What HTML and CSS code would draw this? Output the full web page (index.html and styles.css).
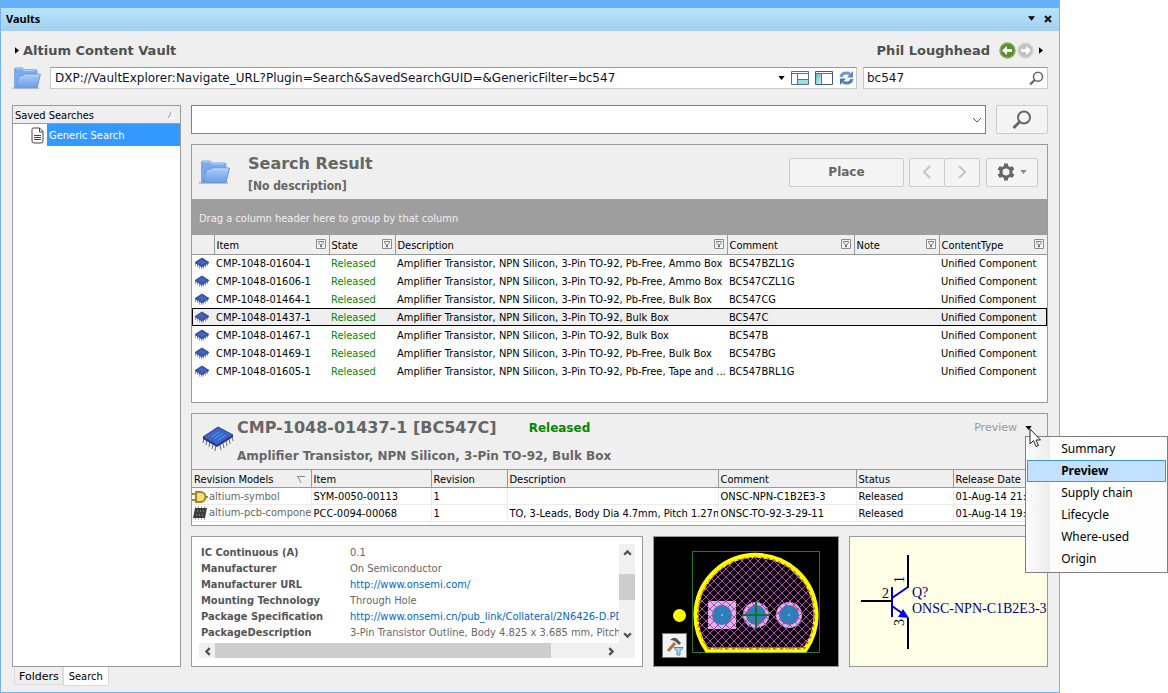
FILE: index.html
```html
<!DOCTYPE html>
<html lang="en">
<head>
  <meta charset="UTF-8">
  <title>Vaults</title>
  <link rel="stylesheet" href="styles.css">
</head>
<body>
  <!-- shared icons -->
  <svg class="defs" width="0" height="0" aria-hidden="true">
    <defs>
      <linearGradient id="folderFront" x1="0" y1="0" x2="0" y2="1">
        <stop offset="0" stop-color="#a9cdfa"/><stop offset="1" stop-color="#6e9be4"/>
      </linearGradient>
      <linearGradient id="pane" x1="0" y1="0" x2="1" y2="1">
        <stop offset="0" stop-color="#5fb4cd"/><stop offset="1" stop-color="#d8f4f8"/>
      </linearGradient>
    </defs>
    <symbol id="folder" viewBox="0 0 32 26">
      <path d="M0 24h29" stroke="#b9bfc9" stroke-width="2"/>
      <path d="M2.500 23V3.500q0-1.500 1.500-1.500h7l2 2h12.500q1.500 0 1.500 1.500V22z" fill="#7aa9ec" stroke="#7fa9e4"/>
      <path d="M4 3h7l2 2h12" stroke="#b8d5fb" fill="none"/>
      <path d="M3.500 23.500L7.500 11h4l1.500-2h17.500L27 23.500z" fill="url(#folderFront)" stroke="#6b97dc"/>
      <path d="M8.500 12h3.500l1.500-2h15.500" stroke="#c3dcfd" fill="none"/>
    </symbol>
    <symbol id="chip" viewBox="0 0 32 26">
      <path d="M2 12l-1 5M5 14l-1 5M8 16l-1 5M11 18l-1 5M14 19l-1 6M18 19l1 5M21 17l1 5M24 15l1 5M27 13l1 5M30 11l1 4" stroke="#6c6c76"/>
      <path d="M1 11v2l14 8 16-10V9z" fill="#26357f"/>
      <path d="M1 11L16 1l15 8-16 10z" fill="#4262c8" stroke="#2a3f96"/>
      <path d="M9 11l8-5M12 13l9-6M16 14l8-5" stroke="#35b0d8"/>
    </symbol>
    <symbol id="chipSmall" viewBox="0 0 16 12">
      <path d="M1.500 6v3M3.500 7v3M5.500 8v3.500M7.500 9v3M9.500 9v2.500M11.500 8v2.500M13.500 6v3" stroke="#9a9ca8"/>
      <path d="M1 5.500L8 1l7 4.500L8 10z" fill="#3c58ae" stroke="#3a4e92"/>
      <path d="M5 5.500l4-2M7 7l4-2" stroke="#5076c4"/>
    </symbol>
    <symbol id="filter" viewBox="0 0 10 10">
      <path d="M.5.5h9v9h-9z" fill="#f4f4f4" stroke="#8c8c8c"/>
      <path d="M2.500 2.500h5v1L5.500 6v2h-1V6l-2-2.500z" fill="none" stroke="#777"/>
    </symbol>
    <symbol id="magnifier" viewBox="0 0 20 20">
      <circle cx="12" cy="7.500" r="6" fill="none" stroke="#666" stroke-width="2"/>
      <path d="M7.500 12L1.500 18" stroke="#666" stroke-width="3"/>
    </symbol>
    <symbol id="down" viewBox="0 0 8 5"><path d="M0 0h8L4 5z"/></symbol>
    <symbol id="right" viewBox="0 0 5 8"><path d="M0 0l5 4-5 4z"/></symbol>
    <symbol id="chev" viewBox="0 0 10 16"><path d="M8 2L2 8l6 6" fill="none" stroke="currentColor" stroke-width="2"/></symbol>
    <symbol id="scroll" viewBox="0 0 8 6"><path d="M1 5l3-3 3 3" fill="none" stroke="#505050" stroke-width="2"/></symbol>
  </svg>

  <div class="window">
    <header class="titlebar">
      <span>Vaults</span>
      <button class="icon-btn" aria-label="Panel menu"><svg width="7" height="5"><use href="#down"/></svg></button>
      <button class="icon-btn" aria-label="Close"><svg width="8" height="8" viewBox="0 0 8 8"><path d="M1 1l6 6M7 1L1 7" stroke="#111" stroke-width="2"/></svg></button>
    </header>

    <div class="body">
      <div class="vault-row">
        <button class="icon-btn" aria-label="Choose vault"><svg width="4" height="7"><use href="#right"/></svg></button>
        <h1>Altium Content Vault</h1>
        <span class="user">Phil Loughhead</span>
        <button class="icon-btn" aria-label="Back"><svg width="17" height="17" viewBox="0 0 17 17"><circle cx="8.500" cy="8.500" r="7.500" fill="#5c8f29" stroke="#8aa96b" stroke-width="1.500"/><path d="M3 8.500L8 4v3h5v3H8v3z" fill="#fff"/></svg></button>
        <button class="icon-btn" aria-label="Forward"><svg width="17" height="17" viewBox="0 0 17 17"><circle cx="8.500" cy="8.500" r="7.500" fill="#c2c2c2" stroke="#d6d6d6" stroke-width="1.500"/><path d="M14 8.500L9 4v3H4v3h5v3z" fill="#fff"/></svg></button>
        <button class="icon-btn more" aria-label="More"><svg width="4" height="7"><use href="#right"/></svg></button>
      </div>

      <div class="address-row">
        <svg class="folder" width="30" height="24"><use href="#folder"/></svg>
        <div class="field address">
          <input type="text" aria-label="Address" value="DXP://VaultExplorer:Navigate_URL?Plugin=Search&amp;SavedSearchGUID=&amp;GenericFilter=bc547">
          <button class="icon-btn" aria-label="History"><svg width="7" height="4" viewBox="0 0 8 5"><path d="M0 0h8L4 5z"/></svg></button>
          <button class="icon-btn" aria-label="Preview layout"><svg width="18" height="14" viewBox="0 0 18 14"><path d="M.5.5h17v13H.5z" fill="#fff" stroke="#55718c"/><path d="M1 2.500h16M6.500 3v10M7 8.500h10" stroke="#55718c" fill="none"/><path d="M7 9h10v4H7z" fill="#9fdce4"/></svg></button>
          <button class="icon-btn" aria-label="Tree layout"><svg width="18" height="14" viewBox="0 0 18 14"><path d="M.5.5h17v13H.5z" fill="#fff" stroke="#3f5a7c"/><path d="M1 3h5v10H1z" fill="url(#pane)"/><path d="M1 2.500h16M6.500 3v10" stroke="#55718c" fill="none"/></svg></button>
          <button class="icon-btn" aria-label="Refresh"><svg width="15" height="14" viewBox="0 0 15 14"><path d="M2 6a5.500 4.500 0 0 1 9-3" fill="none" stroke="#6f97cd" stroke-width="3"/><path d="M14 0v6.500H8z" fill="#5d86bf"/><path d="M13 8a5.500 4.500 0 0 1-9 3" fill="none" stroke="#5b80b6" stroke-width="3"/><path d="M1 14V7.500h6z" fill="#4b74ae"/></svg></button>
        </div>
        <div class="field quick">
          <input type="text" aria-label="Quick search" value="bc547">
          <button class="icon-btn" aria-label="Find"><svg width="15" height="15"><use href="#magnifier"/></svg></button>
        </div>
      </div>

      <div class="main">
        <aside class="sidebar">
          <div class="tree">
            <div class="tree-head">Saved Searches <svg width="8" height="8" viewBox="0 0 8 8"><path d="M1 7.500L4.500 0" stroke="#999"/><path d="M4.500 0L7.500 7.500H0" stroke="#fff" fill="none"/></svg></div>
            <div class="tree-item">
              <svg width="13" height="17" viewBox="0 0 13 17"><path d="M2.500 1h6L12 4.500V14q0 2-2 2H3q-2 0-2-2V2.500Q1 1 2.500 1zM8.500 1v4H12" fill="#fff" stroke="#444"/><path d="M3 8.500h7M3 10.500h7M3 12.500h7" stroke="#444"/></svg>
              <a href="#">Generic Search</a>
            </div>
          </div>
          <nav class="tabs">
            <button class="tab folders">Folders</button>
            <button class="tab active">Search</button>
          </nav>
        </aside>

        <main class="content">
          <div class="search-row">
            <div class="combo">
              <select aria-label="Search query"><option></option></select>
              <svg width="10" height="6" viewBox="0 0 10 6"><path d="M1 1l4 4 4-4" fill="none" stroke="#555"/></svg>
            </div>
            <button class="btn" aria-label="Search"><svg width="20" height="20"><use href="#magnifier"/></svg></button>
          </div>

          <section class="panel results">
            <div class="results-head">
              <svg class="folder" width="32" height="26"><use href="#folder"/></svg>
              <div class="results-title">
                <h2>Search Result</h2>
                <p>[No description]</p>
              </div>
              <button class="btn place">Place</button>
              <div class="pager">
                <button class="btn" aria-label="Previous"><svg width="10" height="16"><use href="#chev"/></svg></button>
                <button class="btn" aria-label="Next"><svg class="flip" width="10" height="16"><use href="#chev"/></svg></button>
              </div>
              <button class="btn gear" aria-label="Settings">
                <svg width="18" height="18" viewBox="0 0 18 18"><circle cx="9" cy="9" r="5" fill="none" stroke="#666" stroke-width="3"/><path d="M9 .5v3M9 14.500v3M1.600 4.700l2.700 1.600M13.700 11.700l2.700 1.600M1.600 13.300l2.700-1.600M13.700 6.300l2.700-1.600" stroke="#666" stroke-width="4"/></svg>
                <svg width="7" height="4" viewBox="0 0 8 5"><path d="M0 0h8L4 5z" fill="#888"/></svg>
              </button>
            </div>
            <div class="group-bar">Drag a column header here to group by that column</div>
            <table class="grid">
              <colgroup><col class="w-icon"><col class="w-item"><col class="w-state"><col><col class="w-comment"><col class="w-note"><col class="w-type"></colgroup>
              <thead>
                <tr>
                  <td></td>
                  <th><span>Item<button class="icon-btn" aria-label="Filter Item"><svg width="10" height="10"><use href="#filter"/></svg></button></span></th>
                  <th><span>State<button class="icon-btn" aria-label="Filter State"><svg width="10" height="10"><use href="#filter"/></svg></button></span></th>
                  <th><span>Description<button class="icon-btn" aria-label="Filter Description"><svg width="10" height="10"><use href="#filter"/></svg></button></span></th>
                  <th><span>Comment<button class="icon-btn" aria-label="Filter Comment"><svg width="10" height="10"><use href="#filter"/></svg></button></span></th>
                  <th><span>Note<button class="icon-btn" aria-label="Filter Note"><svg width="10" height="10"><use href="#filter"/></svg></button></span></th>
                  <th><span>ContentType<button class="icon-btn" aria-label="Filter ContentType"><svg width="10" height="10"><use href="#filter"/></svg></button></span></th>
                </tr>
              </thead>
              <tbody>
                <tr><td><svg width="16" height="12"><use href="#chipSmall"/></svg></td><td>CMP-1048-01604-1</td><td class="released">Released</td><td>Amplifier Transistor, NPN Silicon, 3-Pin TO-92, Pb-Free, Ammo Box</td><td>BC547BZL1G</td><td></td><td>Unified Component</td></tr>
                <tr><td><svg width="16" height="12"><use href="#chipSmall"/></svg></td><td>CMP-1048-01606-1</td><td class="released">Released</td><td>Amplifier Transistor, NPN Silicon, 3-Pin TO-92, Pb-Free, Ammo Box</td><td>BC547CZL1G</td><td></td><td>Unified Component</td></tr>
                <tr><td><svg width="16" height="12"><use href="#chipSmall"/></svg></td><td>CMP-1048-01464-1</td><td class="released">Released</td><td>Amplifier Transistor, NPN Silicon, 3-Pin TO-92, Pb-Free, Bulk Box</td><td>BC547CG</td><td></td><td>Unified Component</td></tr>
                <tr class="selected"><td><svg width="16" height="12"><use href="#chipSmall"/></svg></td><td>CMP-1048-01437-1</td><td class="released">Released</td><td>Amplifier Transistor, NPN Silicon, 3-Pin TO-92, Bulk Box</td><td>BC547C</td><td></td><td>Unified Component</td></tr>
                <tr><td><svg width="16" height="12"><use href="#chipSmall"/></svg></td><td>CMP-1048-01467-1</td><td class="released">Released</td><td>Amplifier Transistor, NPN Silicon, 3-Pin TO-92, Bulk Box</td><td>BC547B</td><td></td><td>Unified Component</td></tr>
                <tr><td><svg width="16" height="12"><use href="#chipSmall"/></svg></td><td>CMP-1048-01469-1</td><td class="released">Released</td><td>Amplifier Transistor, NPN Silicon, 3-Pin TO-92, Pb-Free, Bulk Box</td><td>BC547BG</td><td></td><td>Unified Component</td></tr>
                <tr><td><svg width="16" height="12"><use href="#chipSmall"/></svg></td><td>CMP-1048-01605-1</td><td class="released">Released</td><td>Amplifier Transistor, NPN Silicon, 3-Pin TO-92, Pb-Free, Tape and ...</td><td>BC547BRL1G</td><td></td><td>Unified Component</td></tr>
              </tbody>
            </table>
          </section>

          <section class="panel detail">
            <div class="detail-head">
              <svg class="chip" width="32" height="26"><use href="#chip"/></svg>
              <div class="detail-title">
                <div class="detail-name"><h2>CMP-1048-01437-1 [BC547C]</h2><strong>Released</strong></div>
                <p>Amplifier Transistor, NPN Silicon, 3-Pin TO-92, Bulk Box</p>
              </div>
              <div class="view-picker">
                <span>Preview</span>
                <button class="icon-btn" aria-label="Choose view"><svg width="7" height="4" viewBox="0 0 8 5"><path d="M0 0h8L4 5z"/></svg></button>
                <div class="menu">
                  <button>Summary</button>
                  <button class="current">Preview</button>
                  <button>Supply chain</button>
                  <button>Lifecycle</button>
                  <button>Where-used</button>
                  <button>Origin</button>
                </div>
                <svg class="cursor" width="12" height="20" viewBox="0 0 12 20"><path d="M1 1v15l3.500-3.500L7 18.500l2.500-1L7 12h4.500z" fill="#fff" stroke="#222"/></svg>
              </div>
            </div>
            <table class="grid models">
              <colgroup><col class="m-model"><col class="m-item"><col class="m-rev"><col><col class="m-comment"><col class="m-status"><col class="m-date"></colgroup>
              <thead>
                <tr>
                  <th><span>Revision Models <svg width="8" height="7" viewBox="0 0 8 7"><path d="M0 .5h8M1 .5L4 7" stroke="#888" fill="none"/></svg></span></th>
                  <th>Item</th><th>Revision</th><th>Description</th><th>Comment</th><th>Status</th><th>Release Date</th>
                </tr>
              </thead>
              <tbody>
                <tr>
                  <td class="model"><svg width="16" height="12" viewBox="0 0 16 12"><path d="M0 3h4M0 9h4M13 6h3" stroke="#a8822a" stroke-width="2"/><path d="M4 1h4.500a5 5 0 0 1 0 10H4z" fill="#f3e077" stroke="#a8822a" stroke-width="2"/></svg>altium-symbol</td>
                  <td>SYM-0050-00113</td><td>1</td><td></td><td>ONSC-NPN-C1B2E3-3</td><td>Released</td><td>01-Aug-14 21:</td>
                </tr>
                <tr>
                  <td class="model"><svg width="16" height="14" viewBox="0 0 16 14"><path d="M3.500 0v14M6.500 0v14M9.500 0v14M12.500 0v14" stroke="#aaa"/><path d="M3 2h12l-2 10H1z" fill="#3d3d3d"/><path d="M5 5h1M8 5h1M11 5h1M4 9h1M7 9h1M10 9h1" stroke="#aaa"/></svg>altium-pcb-component</td>
                  <td>PCC-0094-00068</td><td>1</td><td>TO, 3-Leads, Body Dia 4.7mm, Pitch 1.27mm</td><td>ONSC-TO-92-3-29-11</td><td>Released</td><td>01-Aug-14 19:</td>
                </tr>
              </tbody>
            </table>
          </section>

          <div class="preview-row">
            <section class="panel params">
              <div class="params-view">
                <table>
                  <tbody>
                    <tr><th scope="row">IC Continuous (A)</th><td>0.1</td></tr>
                    <tr><th scope="row">Manufacturer</th><td>On Semiconductor</td></tr>
                    <tr><th scope="row">Manufacturer URL</th><td><a href="#">http://www.onsemi.com/</a></td></tr>
                    <tr><th scope="row">Mounting Technology</th><td>Through Hole</td></tr>
                    <tr><th scope="row">Package Specification</th><td><a href="#">http://www.onsemi.cn/pub_link/Collateral/2N6426-D.PD</a></td></tr>
                    <tr><th scope="row">PackageDescription</th><td>3-Pin Transistor Outline, Body 4.825 x 3.685 mm, Pitch</td></tr>
                  </tbody>
                </table>
              </div>
              <div class="vbar">
                <button class="icon-btn" aria-label="Scroll up"><svg width="9" height="7"><use href="#scroll"/></svg></button>
                <div class="thumb"></div>
                <button class="icon-btn" aria-label="Scroll down"><svg class="turn-down" width="9" height="7"><use href="#scroll"/></svg></button>
              </div>
              <div class="hbar">
                <button class="icon-btn" aria-label="Scroll left"><svg class="turn-left" width="9" height="7"><use href="#scroll"/></svg></button>
                <div class="thumb"></div>
                <button class="icon-btn" aria-label="Scroll right"><svg class="turn-right" width="9" height="7"><use href="#scroll"/></svg></button>
              </div>
            </section>

            <section class="panel pcb">
              <svg width="184" height="129" viewBox="0 0 184 129" role="img" aria-label="Footprint">
                <defs>
                  <pattern id="hatch" width="8" height="8" patternUnits="userSpaceOnUse">
                    <path d="M-1 -1l10 10M9 -1L-1 9" stroke="#c23cc6" fill="none"/>
                  </pattern>
                </defs>
                <path d="M38.500 14.500h127v101h-127z" fill="none" stroke="#1f7a2a"/>
                <path d="M53 113A60 60 0 1 1 151 113z" fill="#000" stroke="#ff0" stroke-width="5"/>
                <path d="M54 64h28v28H54z" fill="#d9b4dc"/>
                <circle cx="102" cy="78" r="13" fill="#d9b4dc"/>
                <circle cx="135" cy="78" r="13" fill="#d9b4dc"/>
                <g fill="#1c86b8"><circle cx="68" cy="78" r="10"/><circle cx="102" cy="78" r="10"/><circle cx="135" cy="78" r="10"/></g>
                <path d="M54 112A58.500 58.500 0 1 1 150 112z" fill="url(#hatch)" stroke="#e0402a" stroke-dasharray="3 3"/>
                <g fill="#1c86b8" opacity=".6"><circle cx="68" cy="78" r="8"/><circle cx="102" cy="78" r="8"/><circle cx="135" cy="78" r="8"/></g>
                <path d="M102 64v28M88 78h28" stroke="#1f6b2a" stroke-width="2"/>
                <path d="M67 78h2M134 78h2" stroke="#cde"/>
                <circle cx="25.500" cy="78.500" r="6.500" fill="#ff0"/>
              </svg>
              <button class="tool" aria-label="Footprint options"><svg width="20" height="20" viewBox="0 0 20 20"><path d="M3 15l7-8" stroke="#b5713c" stroke-width="3"/><path d="M5 4q5-5 9 1l2 2-2 2-3-3q-2-2-6-2z" fill="#555"/><path d="M9 11.500h9l-3 4V19h-3v-3.500z" fill="#a9d0f3" stroke="#5a86b5"/></svg></button>
            </section>

            <section class="panel symbol">
              <svg width="197" height="129" viewBox="0 0 197 129" role="img" aria-label="Schematic symbol">
                <path d="M58 18v33M11 64h31M58 81v31" stroke="#000" stroke-width="2"/>
                <path d="M42 50v30M42 61l16-11M42 69l14 10" stroke="#00c" stroke-width="2" fill="none"/>
                <path d="M59 81l-11-1 5-8z" fill="#00f"/>
                <text class="name" x="62" y="60">Q?</text>
                <text class="name" x="62" y="76">ONSC-NPN-C1B2E3-3</text>
                <text x="32" y="61">2</text>
                <text transform="translate(54 46) rotate(-90)">1</text>
                <text transform="translate(54 89) rotate(-90)">3</text>
              </svg>
            </section>
          </div>
        </main>
      </div>
    </div>
  </div>
</body>
</html>
```
FILE: styles.css
```css
* {
  box-sizing: border-box;
}
body {
  margin: 0;
  min-height: 100vh;
  display: flex;
  padding-right: 108px;
  background: #fff;
  color: #000;
  font-family: "DejaVu Sans Condensed", "DejaVu Sans", sans-serif;
  font-size: 11px;
}
h1, h2, p {
  margin: 0;
}
button, input, select {
  font: inherit;
  color: inherit;
}
svg {
  display: block;
  flex: none;
}
.defs {
  position: absolute;
}
.icon-btn {
  display: flex;
  align-items: center;
  justify-content: center;
  padding: 0;
  border: none;
  background: none;
}

/* window frame */
.window {
  flex: 1;
  min-width: 0;
  display: flex;
  flex-direction: column;
  border: 1px solid #74b4ee;
  border-top: 8px solid #64b0fa;
  background: #efefef;
}
.titlebar {
  display: flex;
  align-items: center;
  gap: 9px;
  height: 23px;
  padding: 0 7px 2px 5px;
  background: linear-gradient(#b9e3fb, #a3d0ee);
  font-family: "Noto Sans", sans-serif;
  font-weight: bold;
}
.titlebar span {
  flex: 1;
}
.body {
  flex: 1;
  display: flex;
  flex-direction: column;
  padding: 6px 11px 6px;
}

/* top rows */
.vault-row {
  display: flex;
  align-items: center;
  gap: 1px;
  height: 26px;
  padding: 0 5px 0 3px;
  color: #505050;
  font: bold 13px "DejaVu Sans", sans-serif;
}
.vault-row h1 {
  flex: 1;
  padding-left: 3px;
  font-size: 13px;
}
.vault-row .user {
  padding-right: 8px;
}
.vault-row .more {
  padding-left: 4px;
}
.address-row {
  display: flex;
  align-items: center;
  height: 30px;
}
.address-row .folder {
  margin-right: 8px;
}
.field {
  display: flex;
  align-items: center;
  height: 22px;
  border: 1px solid #c8c8c8;
  border-top-color: #999;
  background: #fff;
  font: 12px "DejaVu Sans", sans-serif;
}
.field input {
  flex: 1;
  min-width: 0;
  padding: 0 4px;
  border: none;
  background: none;
  color: #101030;
}
.address {
  flex: 1;
  gap: 6px;
  padding-right: 2px;
}
.quick {
  width: 185px;
  margin-left: 6px;
  padding-right: 3px;
}
.quick input {
  padding-left: 3px;
}

/* sidebar */
.main {
  flex: 1;
  display: flex;
  gap: 10px;
  padding-top: 12px;
}
.sidebar {
  width: 169px;
  display: flex;
  flex-direction: column;
}
.tree {
  flex: 1;
  border: 1px solid #999;
  background: #fff;
}
.tree-head {
  display: flex;
  align-items: center;
  justify-content: space-between;
  height: 18px;
  padding: 1px 5px 0 2px;
  border-bottom: 1px solid #999;
  background: #efefef;
}
.tree-item {
  display: flex;
  align-items: center;
  gap: 3px;
  height: 22px;
  padding-left: 18px;
}
.tree-item a {
  flex: 1;
  height: 22px;
  padding-left: 2px;
  background: #3399ff;
  color: #fff;
  line-height: 24px;
  text-decoration: none;
}
.tabs {
  display: flex;
  align-items: flex-start;
  padding-left: 2px;
}
.tab {
  height: 18px;
  padding: 2px 3px 0 4px;
  border: 1px solid #dcdcdc;
  border-top: none;
  background: #efefef;
}
.tab.folders {
  font-family: "DejaVu Sans", sans-serif;
}
.tab.active {
  height: 19px;
  padding: 0 5px;
  background: #fff;
}

/* content column */
.content {
  flex: 1;
  min-width: 0;
  display: flex;
  flex-direction: column;
  gap: 10px;
  padding-bottom: 19px;
}
.btn {
  display: flex;
  align-items: center;
  justify-content: center;
  height: 29px;
  padding: 0;
  border: 1px solid #ccc;
  border-radius: 2px;
  background: #f4f4f4;
  color: #666;
}
.search-row {
  display: flex;
  gap: 10px;
}
.search-row .btn {
  width: 52px;
}
.combo {
  flex: 1;
  display: flex;
  align-items: center;
  padding-right: 3px;
  border: 1px solid #808080;
  background: #fff;
}
.combo select {
  flex: 1;
  height: 27px;
  border: none;
  background: none;
  appearance: none;
}
.panel {
  border: 1px solid #999;
  background: #fff;
}

/* search result */
.results {
  flex: 1;
}
.results-head {
  display: flex;
  align-items: center;
  height: 54px;
  padding: 0 9px 0 7px;
  background: #efefef;
  color: #666;
  font-family: "DejaVu Sans", sans-serif;
}
.results-title {
  flex: 1;
  padding: 4px 0 0 17px;
}
.results-title h2 {
  font-size: 16px;
  line-height: 24px;
}
.results-title p {
  font: bold 12px/20px "DejaVu Sans Condensed", sans-serif;
}
.place {
  width: 115px;
  font-weight: bold;
  font-size: 12px;
}
.pager {
  display: flex;
  margin: 0 6px 0 5px;
  color: #c4c4c4;
}
.pager .btn {
  width: 36px;
  color: inherit;
}
.pager .btn + .btn {
  margin-left: -1px;
}
.flip {
  transform: scaleX(-1);
}
.gear {
  gap: 5px;
  width: 52px;
}
.group-bar {
  height: 36px;
  padding: 1px 0 0 7px;
  background: #9e9e9e;
  color: #f0f0f0;
  line-height: 38px;
}

/* tables */
.grid {
  width: 100%;
  table-layout: fixed;
  border-collapse: collapse;
}
.grid thead tr {
  height: 19px;
  border-bottom: 1px solid #999;
  background: #efefef;
}
.grid th, .grid td {
  overflow: hidden;
  padding: 0 0 0 2px;
  text-align: left;
  font-weight: normal;
  white-space: nowrap;
}
.grid th {
  padding: 2px 0 0 2px;
  border-left: 1px solid #999;
}
.grid th span {
  display: flex;
  align-items: center;
  justify-content: space-between;
  padding-right: 3px;
}
.grid th .icon-btn {
  padding-bottom: 2px;
}
.grid tbody tr {
  height: 18px;
}
.grid .selected {
  outline: 1px solid #000;
  outline-offset: -1px;
  background: #efefef;
}
.grid .released {
  color: #008a00;
}
.w-icon { width: 22px; }
.w-item { width: 115px; }
.w-state { width: 66px; }
.w-comment { width: 127px; }
.w-note { width: 85px; }
.w-type { width: 108px; }

/* item detail */
.detail-head {
  display: flex;
  height: 56px;
  padding-left: 10px;
  background: #efefef;
  border-bottom: 1px solid #999;
  color: #666;
  font-family: "DejaVu Sans", sans-serif;
}
.detail-head .chip {
  margin-top: 12px;
}
.detail-title {
  flex: 1;
  padding-left: 3px;
}
.detail-name {
  display: flex;
  align-items: center;
  gap: 32px;
}
.detail-name h2 {
  font-size: 16px;
  line-height: 28px;
}
.detail-name strong {
  color: #008a00;
  font-size: 12px;
}
.detail-title p {
  font-size: 12px;
  font-weight: bold;
  line-height: 28px;
}
.view-picker {
  position: relative;
  display: flex;
  align-items: center;
  gap: 8px;
  height: 28px;
  padding-right: 15px;
  color: #999;
  font-size: 11px;
}
.cursor {
  position: absolute;
  top: 14px;
  right: 6px;
  z-index: 3;
}
.menu {
  position: absolute;
  top: 22px;
  left: 51px;
  z-index: 2;
  width: 143px;
  padding: 1px 1px 2px;
  border: 1px solid #808080;
  background: linear-gradient(90deg, #fcfcfc, #ececec 24px, #fdfdfd 24px);
}
.menu button {
  display: block;
  width: 100%;
  height: 22px;
  padding: 0 0 0 33px;
  border: 1px solid transparent;
  background: none;
  color: #000;
  font: 12px "Noto Sans", sans-serif;
  text-align: left;
}
.menu .current {
  border-color: #3d95dd;
  background: #c2e0ff;
  font-weight: bold;
}
.models {
  margin-bottom: 3px;
}
.models thead tr {
  height: 18px;
}
.models th:first-child {
  border-left: none;
}
.models tbody tr {
  height: 17px;
  border-bottom: 1px solid #ececec;
}
.models tbody td + td {
  border-left: 1px solid #ececec;
}
.models .model {
  padding-left: 0;
  color: #666;
}
.model svg {
  display: inline-block;
  margin-right: 1px;
  vertical-align: middle;
}
.models th span {
  padding-right: 6px;
}
.m-model { width: 119px; }
.m-item { width: 120px; }
.m-rev { width: 76px; }
.m-comment { width: 138px; }
.m-status { width: 97px; }
.m-date { width: 94px; }

/* bottom previews */
.preview-row {
  display: flex;
  gap: 10px;
  height: 131px;
}
.params {
  flex: 1;
  min-width: 0;
  display: grid;
  grid-template-columns: minmax(0, 1fr) 16px;
  grid-template-rows: 1fr 15px;
  padding: 7px 7px 8px;
  color: #666;
}
.params-view {
  overflow: hidden;
}
.params table {
  border-collapse: collapse;
  white-space: nowrap;
}
.params th, .params td {
  height: 16px;
  padding: 0 0 0 2px;
  text-align: left;
}
.params th {
  min-width: 149px;
  color: #555;
}
.params a {
  color: #0066cc;
  text-decoration: none;
}
.vbar, .hbar {
  display: flex;
  background: #f0f0f0;
}
.vbar {
  flex-direction: column;
}
.hbar {
  grid-column: 1 / 3;
  padding-right: 16px;
}
.vbar .icon-btn, .hbar .icon-btn {
  width: 16px;
  height: 16px;
}
.thumb {
  background: #cdcdcd;
}
.vbar .thumb {
  height: 26px;
  margin: 14px 0 auto;
}
.hbar .thumb {
  width: 80%;
  margin-right: auto;
}
.turn-down { transform: rotate(180deg); }
.turn-left { transform: rotate(-90deg); }
.turn-right { transform: rotate(90deg); }
.pcb {
  position: relative;
  background: #000;
}
.tool {
  position: absolute;
  left: 8px;
  bottom: 8px;
  display: flex;
  align-items: center;
  justify-content: center;
  width: 25px;
  height: 25px;
  padding: 0;
  border: 1px solid #777;
  background: #f2f2f2;
}
.symbol {
  background: #ffffe8;
}
.symbol text {
  font: 14px "Liberation Serif", serif;
}
.symbol .name {
  fill: #000080;
}
```
